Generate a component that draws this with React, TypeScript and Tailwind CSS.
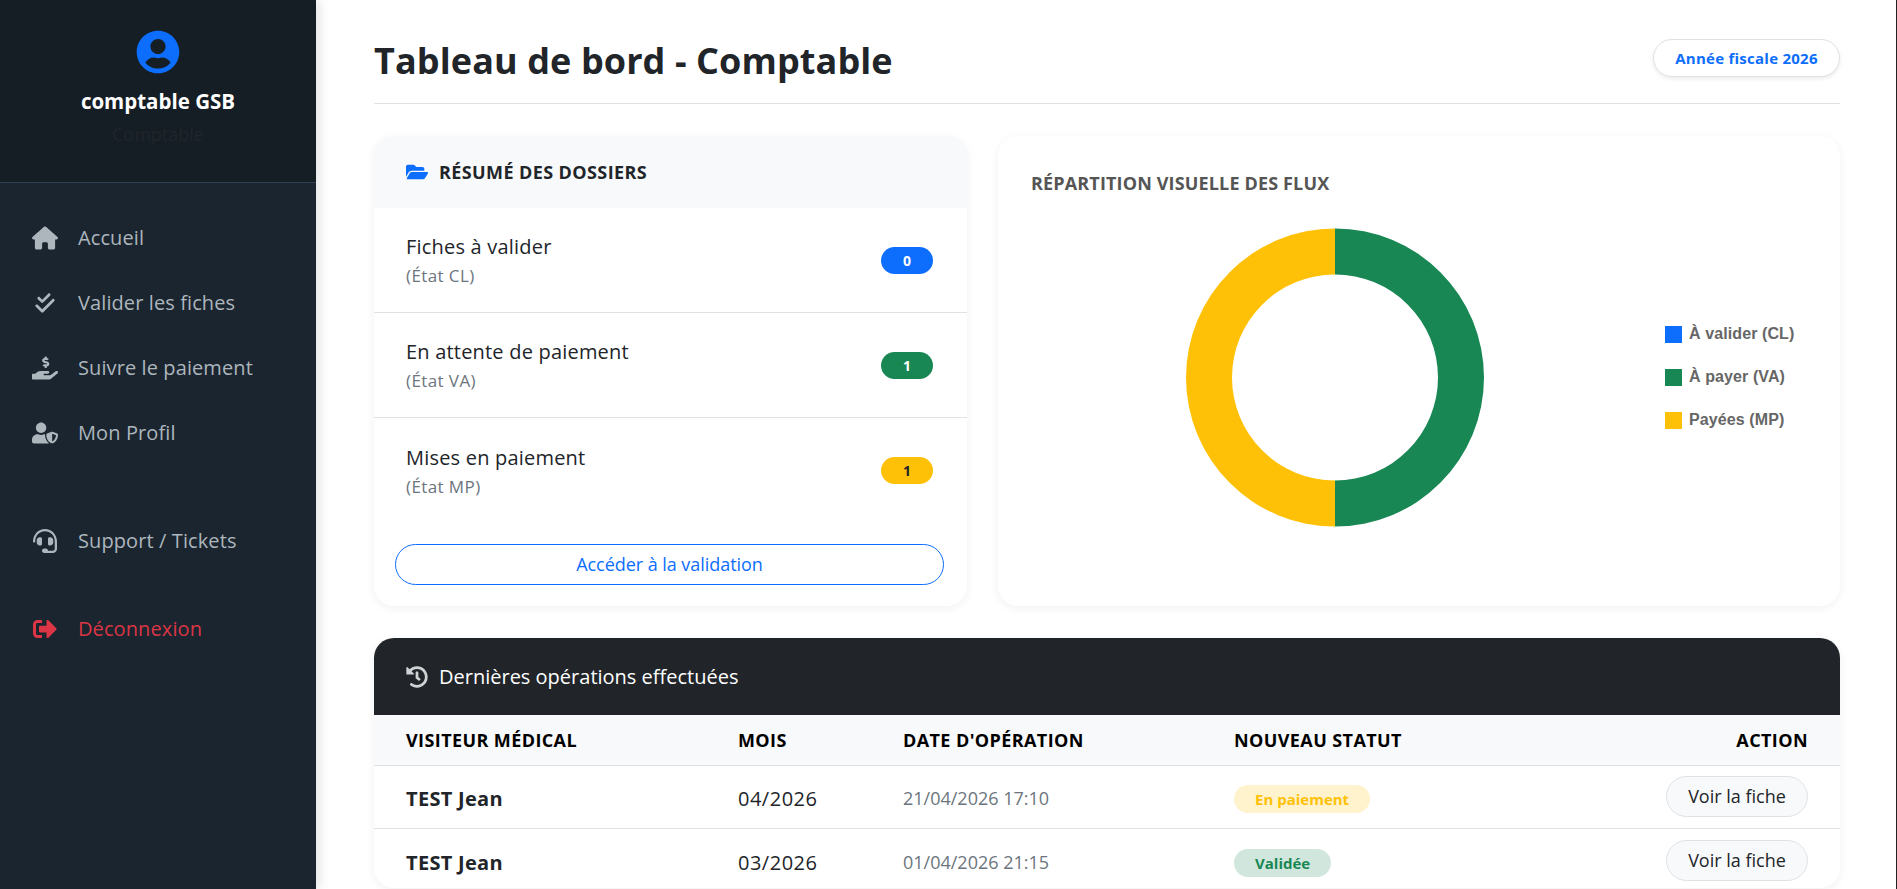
import { FaHandHoldingUsd, FaUserShield, FaHeadset, FaSignOutAlt, FaFolderOpen, FaHistory, FaUserCircle } from "react-icons/fa";
import { FaCheckDouble, FaHouse } from "react-icons/fa6";

const nav = [
  { icon: FaHouse, label: "Accueil", cls: "mb-[29px]", size: "text-[26px]" },
  { icon: FaCheckDouble, label: "Valider les fiches", cls: "mb-[29px]", size: "text-[22px]" },
  { icon: FaHandHoldingUsd, label: "Suivre le paiement", cls: "mb-[29px]", size: "text-[26px]" },
  { icon: FaUserShield, label: "Mon Profil", cls: "mb-[72px]", size: "text-[28px]" },
  { icon: FaHeadset, label: "Support / Tickets", cls: "mb-[52px]", size: "text-[24px]" },
];

const dossiers = [
  { title: "Fiches à valider", sub: "(État CL)", n: 0, badge: "bg-[#0d6efd] text-white" },
  { title: "En attente de paiement", sub: "(État VA)", n: 1, badge: "bg-[#198754] text-white" },
  { title: "Mises en paiement", sub: "(État MP)", n: 1, badge: "bg-[#ffc107] text-[#212529]" },
];

const legend = [
  { label: "À valider (CL)", color: "bg-[#0d6efd]" },
  { label: "À payer (VA)", color: "bg-[#198754]" },
  { label: "Payées (MP)", color: "bg-[#ffc107]" },
];

const ops = [
  { who: "TEST Jean", month: "04/2026", date: "21/04/2026 17:10", status: "En paiement", st: "bg-[#fff3cd] text-[#ffc107]", row: "h-[63px] border-b border-[#dee2e6]" },
  { who: "TEST Jean", month: "03/2026", date: "01/04/2026 21:15", status: "Validée", st: "bg-[#d1e7dd] text-[#198754]", row: "h-[65px]" },
];

const font = "font-['Open_Sans','Noto_Sans',sans-serif]";

export default function App() {
  return (
    <div className={`flex h-[889px] overflow-hidden border-r border-[#222] bg-white text-[#212529] ${font}`}>
      {/* Sidebar */}
      <aside className="relative z-10 w-[316px] shrink-0 bg-[#1a252f] shadow-[4px_0_10px_rgba(0,0,0,0.1)]">
        <div className="flex h-[183px] flex-col items-center border-b border-[#2c3e50] bg-[#151d25] pt-[30px]">
          <FaUserCircle className="text-[44px] text-[#0d6efd]" />
          <div className="mt-[13px] text-[20.5px] leading-[28px] font-bold text-white">comptable GSB</div>
          <div className="mt-[7px] text-[18px] leading-[24px] text-[#212529]">Comptable</div>
        </div>
        <nav className="px-[32px] pt-[37px]">
          {nav.map((item) => (
            <div key={item.label} className={`flex h-[36px] items-center text-[#adb5bd] ${item.cls}`}>
              <span className="flex w-[46px] shrink-0">
                <span className="flex w-[26px] justify-center"><item.icon className={item.size} /></span>
              </span>
              <span className="text-[20px] tracking-[0.1px]">{item.label}</span>
            </div>
          ))}
          <div className="flex h-[36px] items-center text-[#dc3545]">
            <span className="flex w-[46px] shrink-0">
              <span className="flex w-[26px] justify-center"><FaSignOutAlt className="text-[24px]" /></span>
            </span>
            <span className="text-[20px] tracking-[0.1px]">Déconnexion</span>
          </div>
        </nav>
      </aside>

      {/* Main */}
      <main className="min-w-0 flex-1 pt-[24px] pr-[56px] pl-[58px]">
        <header className="flex h-[80px] items-start justify-between border-b border-[#dee2e6]">
          <h1 className="mt-[13px] text-[36px] leading-[48px] font-bold tracking-[0.1px]">Tableau de bord - Comptable</h1>
          <div className="mt-[15px] flex h-[38px] w-[187px] items-center justify-center rounded-full border border-[#dee2e6] bg-white text-[15px] font-bold tracking-[0.25px] text-[#0d6efd] shadow-[0_2px_4px_rgba(0,0,0,0.08)]">
            Année fiscale 2026
          </div>
        </header>

        <div className="mt-[32px] flex gap-[31px]">
          {/* Résumé */}
          <section className="h-[470px] w-[593px] overflow-hidden rounded-[20px] bg-white shadow-[0_2px_10px_rgba(0,0,0,0.06)]">
            <div className="flex h-[72px] items-center gap-[11px] bg-[#f8f9fa] px-[32px]">
              <FaFolderOpen className="text-[22px] text-[#0d6efd]" />
              <span className="text-[18px] font-bold tracking-[0.4px]">RÉSUMÉ DES DOSSIERS</span>
            </div>
            {dossiers.map((d, i) => (
              <div key={d.title} className={`flex h-[105px] items-center justify-between pr-[34px] pl-[32px] ${i < 2 ? "border-b border-[#dee2e6]" : ""}`}>
                <div className="pt-[1px]">
                  <div className="text-[20px] leading-[30px] tracking-[0.2px]">{d.title}</div>
                  <div className="text-[17px] leading-[27px] tracking-[0.4px] text-[#6c757d]">{d.sub}</div>
                </div>
                <span className={`flex h-[27px] w-[52px] items-center justify-center rounded-full text-[14px] font-bold ${d.badge}`}>{d.n}</span>
              </div>
            ))}
            <div className="pt-[21px] pr-[23px] pl-[21px]">
              <button className="h-[41px] w-full rounded-full border border-[#0d6efd] text-[18px] tracking-[-0.05px] text-[#0d6efd]">Accéder à la validation</button>
            </div>
          </section>

          {/* Flux */}
          <section className="flex h-[470px] flex-1 flex-col rounded-[20px] bg-white px-[33px] pt-[35px] shadow-[0_2px_10px_rgba(0,0,0,0.06)]">
            <h2 className="text-[18px] leading-[24px] font-bold tracking-[0.15px] text-[#555]">RÉPARTITION VISUELLE DES FLUX</h2>
            <div className="flex items-center pt-[33px]">
              <div className="ml-[154px] h-[300px] w-[300px]">
                <svg viewBox="0 0 300 300" className="h-full w-full">
                  <path d="M150 .5 A149 149 0 0 1 150 298.5 L150 252.5 A103 103 0 0 0 150 46.5 Z" fill="#198754" />
                  <path d="M150 .5 A149 149 0 0 0 150 298.5 L150 252.5 A103 103 0 0 1 150 46.5 Z" fill="#ffc107" />
                </svg>
              </div>
              <ul className="mb-[2px] ml-[180px] flex flex-col gap-[26px] font-['Liberation_Sans',sans-serif] text-[16px] font-bold tracking-[0.1px] text-[#666]">
                {legend.map((l) => (
                  <li key={l.label} className="flex h-[17px] items-center gap-[7px] whitespace-nowrap">
                    <span className={`h-[17px] w-[17px] ${l.color}`} />
                    {l.label}
                  </li>
                ))}
              </ul>
            </div>
          </section>
        </div>

        {/* Opérations */}
        <section className="mt-[32px] h-[250px] overflow-hidden rounded-[20px] bg-white shadow-[0_2px_10px_rgba(0,0,0,0.06)]">
          <div className="flex h-[77px] items-center gap-[11px] bg-[#212529] px-[32px] text-white">
            <FaHistory className="text-[22px] text-[#d0d2d4]" />
            <span className="pt-[1px] text-[20px]">Dernières opérations effectuées</span>
          </div>
          <table className="w-full table-fixed border-collapse text-left">
            <thead>
              <tr className="h-[50px] border-b border-[#dee2e6] bg-[#f8f9fa] text-[18px] font-bold tracking-[0.4px] text-black">
                <th className="w-[364px] pt-[1px] pl-[32px]">VISITEUR MÉDICAL</th>
                <th className="w-[165px] pt-[1px]">MOIS</th>
                <th className="w-[331px] pt-[1px]">DATE D'OPÉRATION</th>
                <th className="pt-[1px]">NOUVEAU STATUT</th>
                <th className="pt-[1px] pr-[32px] text-right">ACTION</th>
              </tr>
            </thead>
            <tbody>
              {ops.map((o) => (
                <tr key={o.date} className={o.row}>
                  <td className="pt-[4px] pl-[32px] text-[20px] font-bold tracking-[0.3px]">{o.who}</td>
                  <td className="pt-[4px] text-[20px] tracking-[0.5px]">{o.month}</td>
                  <td className="pt-[3px] text-[18px] text-[#6c757d]">{o.date}</td>
                  <td className="pt-[5px]">
                    <span className="inline-flex">
                      <span className={`flex h-[28px] items-center rounded-full px-[21px] text-[15px] font-bold ${o.st}`}>{o.status}</span>
                    </span>
                  </td>
                  <td className="pr-[32px] text-right">
                    <button className="h-[41px] w-[142px] rounded-full border border-[#dee2e6] bg-[#f8f9fa] text-[18px] text-[#212529]">Voir la fiche</button>
                  </td>
                </tr>
              ))}
            </tbody>
          </table>
        </section>
      </main>
    </div>
  );
}
